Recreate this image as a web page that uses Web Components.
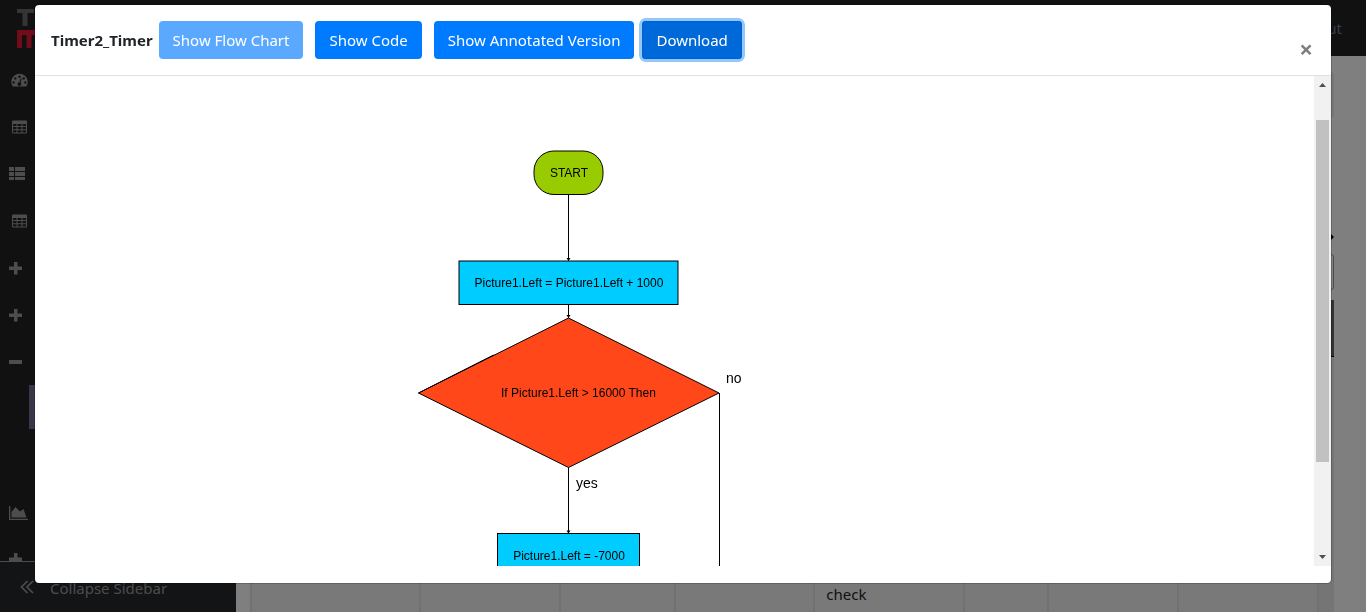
<!DOCTYPE html>
<html lang="en">
<head>
<meta charset="utf-8">
<meta name="viewport" content="width=device-width, initial-scale=1">
<title>Timer2_Timer</title>
<style>
  html, body { height: 100%; margin: 0; }
  body { font-family: "Noto Sans", "Open Sans", sans-serif; font-size: 15px; line-height: 24px; color: #212529; background: #fff; overflow: hidden; }
</style>
</head>
<body>
<app-shell>
  <top-bar slot="top"></top-bar>
  <side-nav slot="side"></side-nav>
  <data-panel></data-panel>
</app-shell>
<modal-dialog>
  <span slot="title">Timer2_Timer</span>
  <action-button slot="actions" state="disabled">Show Flow Chart</action-button>
  <action-button slot="actions">Show Code</action-button>
  <action-button slot="actions">Show Annotated Version</action-button>
  <action-button slot="actions" state="active">Download</action-button>
  <flow-chart></flow-chart>
</modal-dialog>

<script>
function define(name, html) {
  const template = document.createElement('template');
  template.innerHTML = html;
  customElements.define(name, class extends HTMLElement {
    constructor() {
      super();
      this.attachShadow({ mode: 'open' }).append(template.content.cloneNode(true));
    }
  });
}

define('app-shell', `
  <style>
    :host { display: flex; flex-direction: column; height: 100vh; }
    .row { display: flex; flex: 1; min-height: 0; }
  </style>
  <slot name="top"></slot>
  <div class="row"><slot name="side"></slot><slot></slot></div>`);

define('top-bar', `
  <style>
    :host { display: flex; justify-content: space-between; align-items: center; box-sizing: border-box; height: 56px; padding: 0 24px 0 16px; background: #222; }
    svg { display: block; }
    a { color: #6c7f94; text-decoration: none; }
  </style>
  <svg width="40" height="40" viewBox="0 0 40 40" aria-hidden="true">
    <path fill="#6a6a6a" d="M1 1h17v4H1zM6.500 5h5v13h-5z"/>
    <path fill="#e41834" d="M1 22h30v18h-5V27h-8v0h-2.500v13h-5V27H6v13H1z"/>
  </svg>
  <a href="#" aria-label="Logout">out</a>`);

const ICONS = {
  gauge: '<path fill-rule="evenodd" d="M3.700 14.500A8.200 8.200 0 1 1 17.300 14.500ZM10.500 3.500a1.200 1.200 0 1 0 .01 0ZM6.300 5.300a1.200 1.200 0 1 0 .01 0ZM14.700 5.300a1.200 1.200 0 1 0 .01 0ZM4.600 9.300a1.200 1.200 0 1 0 .01 0ZM16.300 9.300a1.200 1.200 0 1 0 .01 0ZM11.600 6.500l-1.300 3.700a1.900 1.900 0 1 0 1.200.3l1.200-3.700z"/>',
  table: '<path fill-rule="evenodd" d="M4 1.500h13a1 1 0 0 1 1 1V13.500a1 1 0 0 1-1 1H4a1 1 0 0 1-1-1V2.500a1 1 0 0 1 1-1ZM4 5v2h3.500V5ZM8.500 5v2h4V5ZM13.500 5v2H17V5ZM4 8v2.300h3.500V8ZM8.500 8v2.300h4V8ZM13.500 8v2.300H17V8ZM4 11.300v2.200h3.500v-2.200ZM8.500 11.300v2.200h4v-2.200ZM13.500 11.300v2.200H17v-2.200Z"/>',
  list: '<path d="M0 1h5v4H0zM6 1h10v4H6zM0 6h5v4H0zM6 6h10v4H6zM0 11h5v3H0zM6 11h10v3H6z"/>',
  plus: '<path d="M5 2h3.500v4.500H13V10H8.500v4.500H5V10H0V6.500h5z"/>',
  minus: '<path d="M0 6h13v4H0z"/>',
  area: '<path d="M0 2h1.300v12.700H19V16H0zM2.500 13.500V8l4-5 4.500 4.500L14.500 5l3 8.500z"/>'
};
customElements.define('nav-item', class extends HTMLElement {
  constructor() {
    super();
    this.attachShadow({ mode: 'open' }).innerHTML = `
      <style>
        :host { display: block; flex: none; }
        a { display: flex; align-items: center; height: 47px; padding-left: 9px; }
        svg { display: block; fill: #9a9a9a; }
      </style>
      <a href="#" aria-label="${this.getAttribute('label')}">
        <svg width="20" height="16" viewBox="0 0 20 16" aria-hidden="true">${ICONS[this.getAttribute('icon')]}</svg>
      </a>`;
  }
});

define('side-nav', `
  <style>
    :host { display: flex; flex-direction: column; flex: none; width: 236px; background: #222; }
    nav { display: flex; flex-direction: column; flex: 1; min-height: 0; overflow: hidden; }
    .sub { flex: none; height: 103px; padding-left: 29px; }
    .sub a { display: block; height: 44px; background: #766a96; }
    button { display: flex; align-items: center; gap: 16px; height: 51px; padding: 2px 0 0 20px; border: 0; border-top: 1px solid #9a9a9a; background: #24282c; color: #9a9a9a; font: inherit; }
  </style>
  <nav>
    <nav-item icon="gauge" label="Dashboard"></nav-item>
    <nav-item icon="table" label="Table"></nav-item>
    <nav-item icon="list" label="List"></nav-item>
    <nav-item icon="table" label="Table"></nav-item>
    <nav-item icon="plus" label="Expand"></nav-item>
    <nav-item icon="plus" label="Expand"></nav-item>
    <nav-item icon="minus" label="Collapse"></nav-item>
    <div class="sub"><a href="#" aria-label="Current page"></a></div>
    <nav-item icon="area" label="Charts"></nav-item>
    <nav-item icon="plus" label="Expand"></nav-item>
  </nav>
  <button type="button">
    <svg width="14" height="16" viewBox="0 0 14 16" fill="none" stroke="#9a9a9a" stroke-width="1.700" aria-hidden="true"><path d="M7.500 1 1.500 7l6 6M13 1 7 7l6 6"/></svg>
    <span>Collapse Sidebar</span>
  </button>`);

define('data-panel', `
  <style>
    :host { display: flex; flex-direction: column; flex: 1; min-width: 0; box-sizing: border-box; padding: 16px 32px 0 14px; overflow: hidden; background: #fff; }
    .crumb { flex: none; height: 46px; border-radius: 4px; background: #e9ecef; }
    .mark { flex: none; align-self: flex-end; margin-top: 115px; }
    input { flex: none; box-sizing: border-box; height: 36px; margin: 13px 0 10px; border: 1px solid #999; border-radius: 3px; background: #fff; }
    .head { flex: none; height: 56px; background: #666; border-bottom: 1px solid #000; }
    .rows { display: flex; flex: 1; flex-direction: column; justify-content: flex-end; min-height: 0; background: #ebebeb; padding-right: 15px; }
    table { width: 100%; table-layout: fixed; border-collapse: collapse; background: #f2f2f2; }
    td { box-sizing: border-box; height: 40px; padding: 4px 11px 0; border: 2px solid #e2e2e2; border-width: 0 2px; vertical-align: middle; }
  </style>
  <div class="crumb"></div>
  <svg class="mark" width="8" height="8" viewBox="0 0 8 8" aria-hidden="true"><path d="M4 0l4 4-4 4z"/></svg>
  <input type="search" aria-label="Search">
  <div class="head"></div>
  <div class="rows">
    <table>
      <colgroup><col style="width:15.800%"><col style="width:13.200%"><col style="width:10.700%"><col style="width:13.100%"><col style="width:14%"><col style="width:7.900%"><col style="width:12.200%"><col></colgroup>
      <tr><td></td><td></td><td></td><td></td><td>check</td><td></td><td></td><td></td></tr>
    </table>
  </div>`);

define('modal-dialog', `
  <style>
    :host { position: fixed; inset: 0; display: flex; align-items: flex-start; padding: 4px 34px; background: rgba(0,0,0,.5); }
    section { flex: 1; min-width: 0; border: 1px solid rgba(0,0,0,.2); border-radius: 5px; background: #fff; background-clip: padding-box; padding-bottom: 17px; }
    header { display: flex; align-items: center; padding: 16px; border-bottom: 1px solid #dee2e6; }
    h5 { margin: 0 6px 0 0; font-size: 15px; line-height: 24px; font-weight: 700; }
    .actions { display: flex; gap: 12px; }
    ::slotted([state="active"]) { margin-left: -4px; }
    .close { align-self: flex-end; margin-left: auto; padding: 0; width: 18px; height: 20px; border: 0; background: none; color: #7f7f7f; font: 700 24px/20px "Noto Sans", sans-serif; }
    .body { display: flex; height: 80vh; }
    .view { flex: 1; min-width: 0; overflow: hidden; }
  </style>
  <section role="dialog" aria-modal="true">
    <header>
      <h5><slot name="title"></slot></h5>
      <div class="actions"><slot name="actions"></slot></div>
      <button class="close" type="button" aria-label="Close">×</button>
    </header>
    <div class="body">
      <div class="view"><slot></slot></div>
      <scroll-track></scroll-track>
    </div>
  </section>`);

define('action-button', `
  <style>
    :host { display: block; }
    button { display: block; height: 38px; padding: 0 14px; border: 0; border-radius: 4px; background: #007bff; color: #fff; font: inherit; white-space: nowrap; }
    :host([state="disabled"]) button { background: #5aa9ff; }
    :host([state="active"]) button { background: #0069d9; box-shadow: inset 0 0 0 1px #0062cc, 0 0 0 3px #92c7ff; }
  </style>
  <button type="button"><slot></slot></button>`);

define('scroll-track', `
  <style>
    :host { display: flex; flex-direction: column; flex: none; width: 17px; background: #f1f1f1; }
    svg { display: block; flex: none; fill: #505050; }
    .lane { display: flex; flex: 1; flex-direction: column; padding: 0 2px; }
    .before { flex: 27; }
    .thumb { flex: 342; background: #c1c1c1; }
    .after { flex: 87; }
  </style>
  <svg width="17" height="17" viewBox="0 0 17 17" aria-hidden="true"><path d="M5 11h7L8.500 7z"/></svg>
  <div class="lane"><div class="before"></div><div class="thumb"></div><div class="after"></div></div>
  <svg width="17" height="17" viewBox="0 0 17 17" aria-hidden="true"><path d="M5 6h7l-3.500 4z"/></svg>`);

define('flow-chart', `
  <style>
    :host { display: block; padding-left: 375px; }
    svg { display: block; font: 12px "Liberation Sans", Arial, sans-serif; }
    .label { font-size: 14px; }
    .shape, .line { stroke: #000; stroke-width: 1; }
    .line { fill: none; }
  </style>
  <svg width="360" height="614" viewBox="0 0 360 614" role="img" aria-label="Flow chart">
    <path class="line" d="M158.500 118.500V185M158.500 228.500V242M158.500 391.500V457M309.500 317V560H158.500"/>
    <path d="M156.500 182h4l-2 3zM156.500 239h4l-2 3zM156.500 454.500h4l-2 3z"/>
    <rect class="shape" fill="#9c0" x="124" y="75" width="69" height="43.500" rx="20"/>
    <rect class="shape" fill="#0cf" x="49" y="185" width="219" height="43.500"/>
    <path class="shape" fill="#ff4719" d="M8.500 317 158.500 242 309 317 158.500 391.500Z"/>
    <path class="line" d="M8.500 317 83.500 279"/>
    <rect class="shape" fill="#0cf" x="87.500" y="457.500" width="142" height="43.500"/>
    <text x="159" y="101" text-anchor="middle">START</text>
    <text x="159" y="211" text-anchor="middle">Picture1.Left = Picture1.Left + 1000</text>
    <text x="91" y="321">If Picture1.Left &gt; 16000 Then</text>
    <text x="159" y="484" text-anchor="middle">Picture1.Left = -7000</text>
    <text class="label" x="166" y="412">yes</text>
    <text class="label" x="316" y="307">no</text>
  </svg>`);
</script>
</body>
</html>
